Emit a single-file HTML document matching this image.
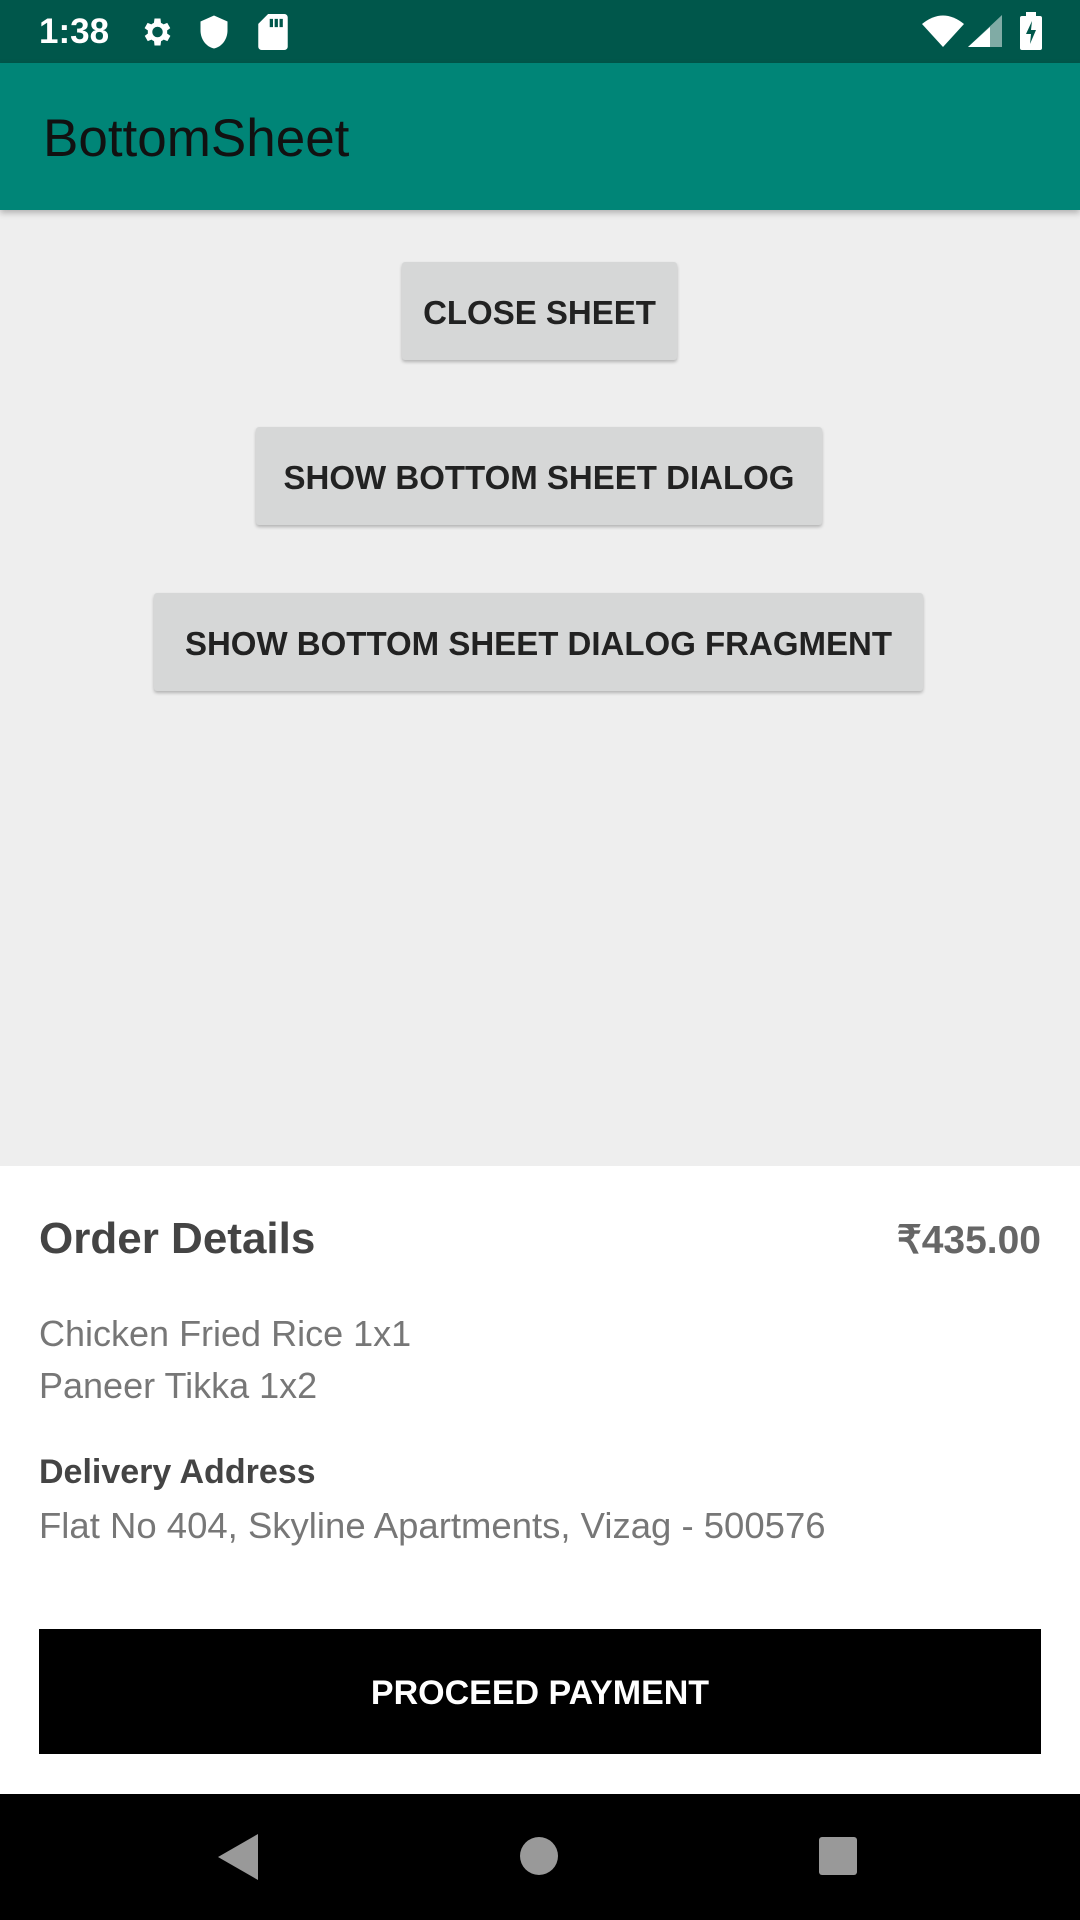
<!DOCTYPE html>
<html><head><meta charset="utf-8"><style>
*{margin:0;padding:0;box-sizing:border-box}
body{width:1080px;height:1920px;position:relative;background:#eeeeee;font-family:"Liberation Sans",sans-serif;overflow:hidden}
.abs{position:absolute}
.sb{left:0;top:0;width:1080px;height:63px;background:#00574b}
.ab{left:0;top:63px;width:1080px;height:147px;background:#008577;box-shadow:0 3px 6px rgba(0,0,0,.25)}
.btn{position:absolute;background:#d6d7d7;color:#222;font-size:33px;font-weight:bold;display:flex;align-items:center;justify-content:center;box-shadow:0 2px 3px rgba(0,0,0,.25);border-radius:3px;padding-top:4px}
.sheet{left:0;top:1166px;width:1080px;height:628px;background:#fff}
.nav{left:0;top:1794px;width:1080px;height:126px;background:#000}
</style></head><body>
<div class="abs sb">
 <div class="abs" style="left:39px;top:12px;color:#fff;font-size:35px;font-weight:bold">1:38</div>
 <svg class="abs" style="left:138px;top:14px" width="36" height="36" viewBox="0 0 24 24"><path fill="#fff" d="M19.4 13a7.5 7.5 0 0 0 0-2l2.1-1.6-2-3.5-2.5 1a7 7 0 0 0-1.7-1L15 3h-4l-.4 2.9a7 7 0 0 0-1.7 1l-2.5-1-2 3.5L6.6 11a7.5 7.5 0 0 0 0 2l-2.1 1.6 2 3.5 2.5-1a7 7 0 0 0 1.7 1L11 21h4l.4-2.9a7 7 0 0 0 1.7-1l2.5 1 2-3.5zM13 15.5a3.5 3.5 0 1 1 0-7 3.5 3.5 0 0 1 0 7z"/></svg>
 <svg class="abs" style="left:198px;top:14px" width="32" height="36" viewBox="0 0 20 24"><path fill="#fff" d="M10 1L1 5v6c0 6 4 11 9 12 5-1 9-6 9-12V5z"/></svg>
 <svg class="abs" style="left:258px;top:14px" width="30" height="36" viewBox="0 0 18 22"><path fill="#fff" d="M6 0h10a2 2 0 0 1 2 2v18a2 2 0 0 1-2 2H2a2 2 0 0 1-2-2V6zM7 3v5h2V3zm3 0v5h2V3zm3 0v5h2V3z"/></svg>
 <svg class="abs" style="left:922px;top:15px" width="42" height="32" viewBox="0 0 42 32"><path fill="#fff" d="M0 9Q21-8 42 9L21 32z"/></svg>
 <svg class="abs" style="left:968px;top:15px" width="34" height="32" viewBox="0 0 34 32"><path fill="#fff" opacity=".5" d="M34 0V32H0z"/><path fill="#fff" d="M22 12V32H0z"/></svg>
 <svg class="abs" style="left:1020px;top:12px" width="22" height="38" viewBox="0 0 22 38"><rect x="0" y="4" width="22" height="34" rx="2" fill="#fff"/><rect x="6" y="0" width="10" height="5" fill="#fff"/><path d="M12 9L6 22h5l-1 10 6-14h-5z" fill="#00574b"/></svg>
</div>
<div class="abs ab"><div class="abs" style="left:43px;top:45px;color:#111;font-size:53px">BottomSheet</div></div>
<div class="btn" style="left:402px;top:262px;width:275px;height:98px">CLOSE SHEET</div>
<div class="btn" style="left:256px;top:427px;width:566px;height:98px">SHOW BOTTOM SHEET DIALOG</div>
<div class="btn" style="left:154px;top:593px;width:769px;height:98px">SHOW BOTTOM SHEET DIALOG FRAGMENT</div>
<div class="abs sheet">
 <div class="abs" style="left:39px;top:48px;font-size:44px;font-weight:bold;color:#444">Order Details</div>
 <div class="abs" style="right:39px;top:52px;font-size:39px;font-weight:bold;color:#666">₹435.00</div>
 <div class="abs" style="left:39px;top:142px;font-size:36px;color:#777;line-height:52px">Chicken Fried Rice 1x1<br>Paneer Tikka 1x2</div>
 <div class="abs" style="left:39px;top:287px;font-size:34px;font-weight:bold;color:#444">Delivery Address</div>
 <div class="abs" style="left:39px;top:339px;font-size:36.5px;color:#777">Flat No 404, Skyline Apartments, Vizag - 500576</div>
 <div class="abs" style="left:39px;top:463px;width:1002px;height:125px;background:#000;color:#fff;font-size:34px;font-weight:bold;display:flex;align-items:center;justify-content:center;padding-top:4px">PROCEED PAYMENT</div>
</div>
<div class="abs nav">
 <svg class="abs" style="left:218px;top:40px" width="40" height="46" viewBox="0 0 40 46"><path d="M40 0V46L0 23z" fill="#fff" opacity=".6"/></svg>
 <div class="abs" style="left:520px;top:43px;width:38px;height:38px;border-radius:50%;background:#fff;opacity:.6"></div>
 <div class="abs" style="left:819px;top:43px;width:38px;height:38px;border-radius:3px;background:#fff;opacity:.6"></div>
</div>
</body></html>
